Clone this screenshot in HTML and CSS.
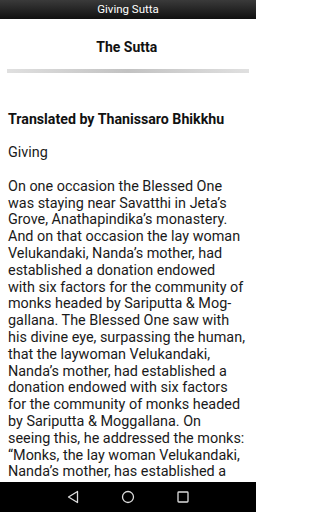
FILE: index.html
```html
<!DOCTYPE html>
<html>
<head>
<meta charset="utf-8">
<link rel="stylesheet" href="styles.css">
</head>
<body>
<div class="screen">
  <header class="appbar">Giving Sutta</header>
  <main class="content">
    <h1 class="title">The Sutta</h1>
    <div class="rule"></div>
    <p class="byline">Translated by Thanissaro Bhikkhu</p>
    <p class="para">Giving</p>
    <p class="para">On one occasion the Blessed One was staying near Savatthi in Jeta’s Grove, Anathapindika’s monastery. And on that occasion the lay woman Velukandaki, Nanda’s mother, had established a donation endowed with six factors for the community of monks headed by Sariputta &amp; Mog&shy;gallana. The Blessed One saw with his divine eye, surpassing the human, that the laywoman Velukandaki, Nanda’s mother, had established a donation endowed with six factors for the community of monks headed by Sariputta &amp; Moggallana. On seeing this, he addressed the monks: “Monks, the lay woman Velukandaki, Nanda’s mother, has established a donation endowed with six factors for the community of monks headed by Sariputta &amp; Moggallana.</p>
  </main>
  <nav class="navbar">
    <svg class="nav-icon" viewBox="0 0 16 16" width="16" height="16"><path d="M12.5 2.5 L3.5 8 L12.5 13.5 Z" fill="none" stroke="#ddd" stroke-width="1.3" stroke-linejoin="round"/></svg>
    <svg class="nav-icon" viewBox="0 0 16 16" width="16" height="16"><circle cx="8" cy="8" r="5.5" fill="none" stroke="#ddd" stroke-width="1.3"/></svg>
    <svg class="nav-icon" viewBox="0 0 16 16" width="16" height="16"><rect x="3" y="3" width="10" height="10" rx="0.8" fill="none" stroke="#ddd" stroke-width="1.3"/></svg>
  </nav>
</div>
</body>
</html>
```
FILE: styles.css
```css
* { box-sizing: border-box; }
html, body { margin: 0; padding: 0; }
body {
  width: 256px;
  height: 512px;
  overflow: hidden;
  font-family: Roboto, "Noto Sans", sans-serif;
  background: #fff;
}
.screen {
  width: 256px;
  height: 512px;
  display: flex;
  flex-direction: column;
}
.appbar {
  height: 19px;
  flex: none;
  background: linear-gradient(#3a3a3a, #101010);
  color: #fff;
  font-size: 11.5px;
  line-height: 19px;
  text-align: center;
}
.content {
  flex: 1;
  overflow: hidden;
  padding: 0 10.5px 0 8px;
  color: #1a1a1a;
}
.title {
  margin: 19px 0 0;
  font-size: 14px;
  line-height: 18px;
  font-weight: 700;
  text-align: center;
  color: #111;
}
.rule {
  margin: 13px -3.5px 0 -1px;
  height: 4px;
  background: linear-gradient(90deg, #e0e0e0, #c2c2c2 50%, #e0e0e0);
}
.byline {
  margin: 38px 0 0;
  font-size: 14.2px;
  line-height: 17px;
  font-weight: 700;
  color: #111;
}
.para {
  margin: 17px 0 0;
  font-size: 14.4px;
  line-height: 16.8px;
  hyphens: manual;
}
.navbar {
  height: 30px;
  flex: none;
  background: #000;
  display: flex;
  justify-content: center;
  align-items: center;
  gap: 39px;
}
.nav-icon { display: block; }
```
